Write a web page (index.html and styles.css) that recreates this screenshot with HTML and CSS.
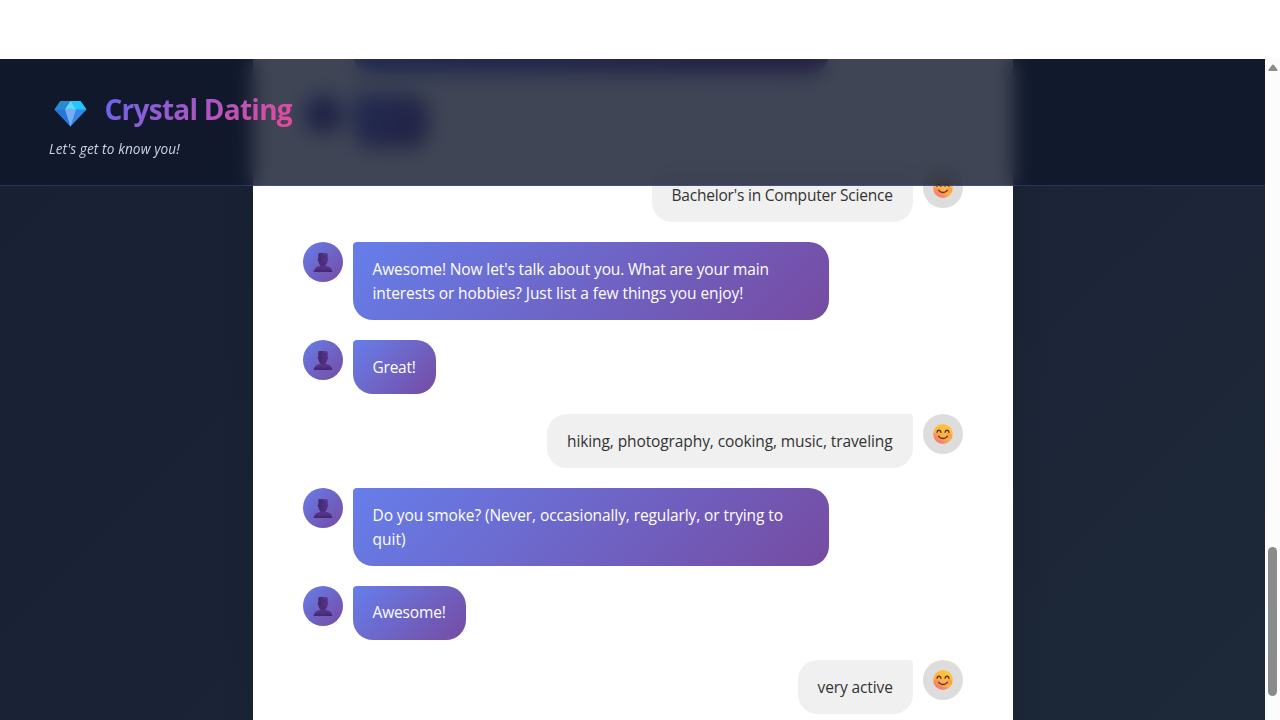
FILE: index.html
```html
<!DOCTYPE html>
<html lang="en">
<head>
<meta charset="utf-8">
<title>Crystal Dating</title>
<link rel="stylesheet" href="styles.css">
</head>
<body>
<svg class="defs" aria-hidden="true">
  <defs>
    <linearGradient id="face" x1="0.8" y1="0" x2="0.2" y2="1"><stop offset="0" stop-color="#ffc83a"/><stop offset="0.6" stop-color="#ffb044"/><stop offset="1" stop-color="#f4677c"/></linearGradient>
    <linearGradient id="bust" x1="0" y1="0" x2="0" y2="1"><stop offset="0" stop-color="#5b3a90"/><stop offset="1" stop-color="#43246f"/></linearGradient>
    <linearGradient id="head" x1="0" y1="0" x2="1" y2="0"><stop offset="0" stop-color="#42286f"/><stop offset="1" stop-color="#57348a"/></linearGradient>
    <symbol id="person" viewBox="0 0 20 20">
      <path d="M.6 20.500c0-3.700 3-6.300 6.900-6.800h5c3.900.5 6.900 3.100 6.900 6.800z" fill="url(#bust)"/>
      <path d="M5.300 2.200C5.600 1.300 6.300 1 7.200 1h5.600c.9 0 1.600.3 1.900 1.200v4c.9.200.9 2.300-.2 2.700-.1 2-.7 3.400-2 4.300v1h-5v-1c-1.300-.9-1.900-2.300-2-4.300-1.100-.4-1.100-2.500-.2-2.700z" fill="url(#head)"/>
      <path d="M10 2h4" stroke="#7a50a2" stroke-width=".8" opacity=".7"/>
    </symbol>
    <symbol id="smile" viewBox="0 0 20 20">
      <circle cx="10" cy="10" r="9.900" fill="url(#face)"/>
      <circle cx="4" cy="12" r="2.700" fill="#f58a55" opacity=".55"/><circle cx="16.200" cy="12" r="2.700" fill="#f58a55" opacity=".55"/>
      <path d="M4 8.200c.6-2.600 3.200-2.600 3.900 0M12.100 8.200c.6-2.600 3.200-2.600 3.900 0M5.800 12.300c2 2.900 6.400 2.900 8.400 0" fill="none" stroke="#5a3142" stroke-width="1.400" stroke-linecap="round"/>
    </symbol>
  </defs>
</svg>
<div class="page">
  <main class="chat">
    <div class="row"><div class="avatar bot"><svg><use href="#person"/></svg></div><div class="bubble from-bot wide tall"></div></div>
    <div class="row"><div class="avatar bot"><svg><use href="#person"/></svg></div><div class="bubble from-bot w-nice"></div></div>
    <div class="row user"><div class="bubble from-user w-degree"><span class="t-degree">Bachelor's in Computer Science</span></div><div class="avatar"><svg><use href="#smile"/></svg></div></div>
    <div class="row"><div class="avatar bot"><svg><use href="#person"/></svg></div><div class="bubble from-bot wide"><span class="t-hobby1">Awesome! Now let's talk about you. What are your main</span><br><span class="t-hobby2">interests or hobbies? Just list a few things you enjoy!</span></div></div>
    <div class="row"><div class="avatar bot"><svg><use href="#person"/></svg></div><div class="bubble from-bot w-great"><span class="t-great">Great!</span></div></div>
    <div class="row user"><div class="bubble from-user w-hiking"><span class="t-hiking">hiking, photography, cooking, music, traveling</span></div><div class="avatar"><svg><use href="#smile"/></svg></div></div>
    <div class="row"><div class="avatar bot"><svg><use href="#person"/></svg></div><div class="bubble from-bot wide"><span class="t-smoke">Do you smoke? (Never, occasionally, regularly, or trying to</span><br><span>quit)</span></div></div>
    <div class="row"><div class="avatar bot"><svg><use href="#person"/></svg></div><div class="bubble from-bot w-awesome"><span class="t-awesome">Awesome!</span></div></div>
    <div class="row user"><div class="bubble from-user w-active"><span class="t-active">very active</span></div><div class="avatar"><svg><use href="#smile"/></svg></div></div>
  </main>
  <header class="header">
    <div class="brand">
      <svg class="gem" viewBox="0 0 33 27">
        <path d="M6.500 1h20L32.500 9.500 16.500 26.500.5 9.500z" fill="#3288e5"/>
        <path d="M6.500 1h10L11 9.500H.5z" fill="#278bcf"/>
        <path d="M16.500 1h10l6 8.500H22z" fill="#20c8fb"/>
        <path d="M16.500 1 22 9.500l-5.500 2-5.500-2z" fill="#61dcf7"/>
        <path d="M.5 9.500H11l5.500 17z" fill="#2874d8"/>
        <path d="M11 9.500l5.500-1.500 5.500 1.500-5.500 17z" fill="#78adf5"/>
      </svg>
      <h1 class="title">Crystal Dating</h1>
    </div>
    <p class="tagline">Let's get to know you!</p>
  </header>
</div>
<div class="scrollbar"><svg class="arrow" viewBox="0 0 10 7"><path d="M1.500 7C.4 7 .1 6.200.7 5.400L4 1C4.500.2 5.500.2 6 1l3.300 4.400c.6.8.3 1.600-.8 1.600z" fill="#8b8b8b"/></svg><div class="thumb"></div></div>
</body>
</html>
```
FILE: styles.css
```css
* { box-sizing: border-box; }
body {
  margin: 0;
  height: 720px;
  padding-top: 59px;
  display: flex;
  overflow: hidden;
  background: #fff;
  font-family: "Open Sans", "Noto Sans", sans-serif;
}
.defs { position: absolute; width: 0; height: 0; }
.page {
  position: relative;
  width: 1265px;
  height: 661px;
  overflow: hidden;
  background: linear-gradient(135deg, #182033, #1d2839);
}
.chat {
  width: 760px;
  margin: -82.700px auto 0;
  padding: 20px 50px;
  display: flex;
  flex-direction: column;
  gap: 20px;
  background: #fff;
  box-shadow: 0 0 30px rgba(0, 0, 0, .1);
}
.row { display: flex; align-items: flex-start; gap: 10px; }
.user { justify-content: flex-end; }
.avatar {
  width: 40px;
  height: 40px;
  border-radius: 50%;
  background: #ddd;
  display: flex;
  align-items: center;
  justify-content: center;
}
.avatar svg { width: 20px; height: 20px; overflow: visible; }
.bot, .from-bot { background: linear-gradient(135deg, #667eea, #764ba2); }
.bubble {
  min-height: 54px;
  padding: 15px 20px;
  border-radius: 20px;
  font-size: 15.500px;
  line-height: 24px;
  white-space: nowrap;
}
.from-bot { color: #fff; border-top-left-radius: 4px; }
.from-user { background: #f0f0f0; color: #333; border-top-right-radius: 4px; }
.wide { width: 476px; }
.tall { height: 78px; }
.w-nice { width: 76px; }
.w-degree { width: 261px; }
.w-great { width: 83px; }
.w-hiking { width: 365.500px; }
.w-awesome { width: 113px; padding-top: 14px; }
.w-active { width: 115px; }
.t-degree { letter-spacing: -.2px; }
.t-hobby1 { letter-spacing: -.12px; }
.t-hobby2 { letter-spacing: -.085px; }
.t-great { letter-spacing: -.23px; }
.t-hiking { letter-spacing: -.1px; }
.t-smoke { letter-spacing: -.1px; }
.t-awesome { letter-spacing: -.15px; }
.t-active { letter-spacing: -.11px; }
.header {
  position: absolute;
  inset: 0 0 auto;
  height: 127px;
  padding: 31px 48px 0;
  background: rgba(15, 23, 42, .8);
  backdrop-filter: blur(10px);
  border-bottom: 1px solid rgba(99, 102, 241, .3);
}
.brand { display: flex; align-items: center; height: 38px; }
.gem { width: 33px; height: 27px; margin: 8px 17.500px 0 6px; }
.title {
  margin: 0;
  font-size: 28px;
  line-height: 38px;
  font-weight: 700;
  letter-spacing: -.75px;
  white-space: nowrap;
  background: linear-gradient(135deg, #6366f1, #ec4899);
  background-clip: text;
  color: transparent;
}
.tagline {
  margin: 11px 0 0 1px;
  font-size: 13.600px;
  line-height: 20px;
  font-style: italic;
  letter-spacing: .12px;
  color: #cbd5e1;
}
.scrollbar { width: 15px; background: #fcfcfc; display: flex; flex-direction: column; align-items: center; }
.arrow { width: 10px; height: 7px; margin-top: 5px; }
.thumb { width: 9px; height: 149px; margin-top: 476px; border-radius: 5px; background: #8b8b8b; }
```
